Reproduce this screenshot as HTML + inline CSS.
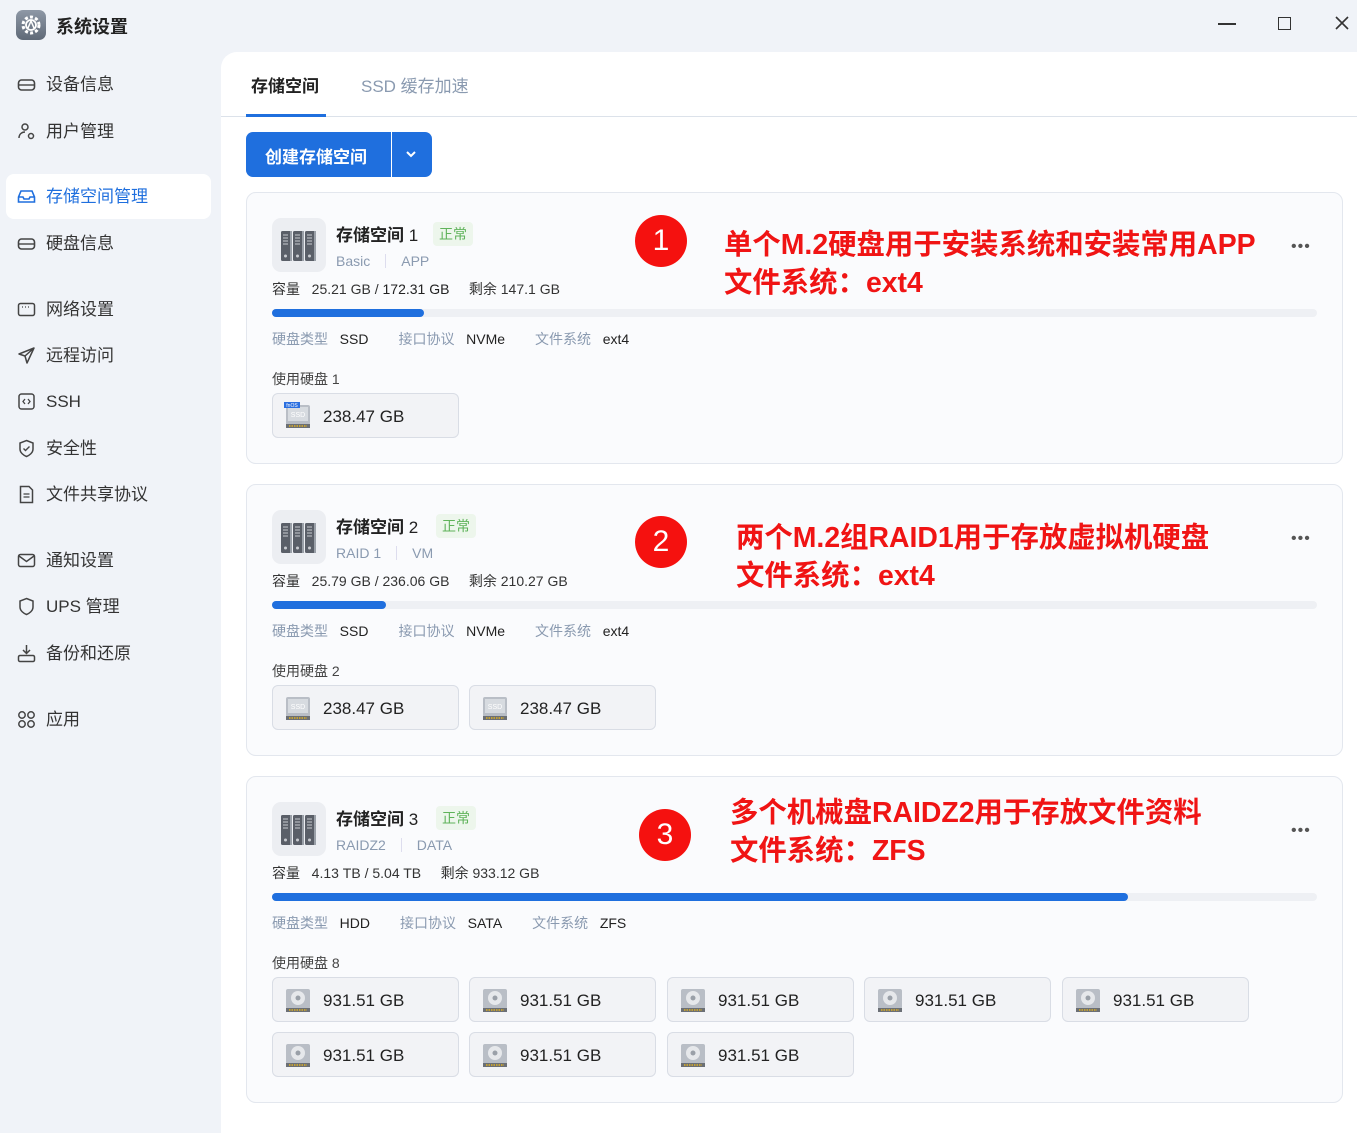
<!DOCTYPE html>
<html><head><meta charset="utf-8">
<style>
*{box-sizing:border-box;margin:0;padding:0}
body{width:1357px;height:1133px;overflow:hidden;background:#f0f3f8;font-family:"Liberation Sans","Noto Sans CJK SC",sans-serif;color:#222;position:relative}
.a{position:absolute;white-space:nowrap}
.nav{position:absolute;left:46px;font-size:17px;color:#333;line-height:20px;transform:translateY(2px)}
.ic{position:absolute;left:17px;width:19px;height:19px;transform:translateY(1px)}
.main{position:absolute;left:221px;top:52px;width:1136px;height:1081px;background:#fff;border-top-left-radius:16px}
.card{position:absolute;left:246px;width:1097px;background:#fafbfd;border:1px solid #e3e7ee;border-radius:10px}
.chip{position:absolute;width:187px;height:45px;background:#f2f3f6;border:1px solid #d9dde5;border-radius:6px}
.chip span{position:absolute;left:50px;top:13px;font-size:17px;color:#222}
.red{position:absolute;color:#f01414;font-weight:bold;font-size:28.4px;line-height:38px;white-space:nowrap;transform:translateY(2px)}
.circ{position:absolute;width:52px;height:52px;border-radius:50%;background:#f5110f;color:#fff;font-size:30px;text-align:center;line-height:52px}
.lbl{color:#8a9ab0}
</style></head><body>
<div class="a" style="left:16px;top:10px;width:30px;height:30px;border-radius:7px;background:linear-gradient(#8e98a6,#5f6977)">
<svg width="30" height="30" viewBox="0 0 30 30"><circle cx="15" cy="15" r="8" fill="none" stroke="#fff" stroke-width="3" stroke-dasharray="3 2.2"/><circle cx="15" cy="15" r="5" fill="none" stroke="#fff" stroke-width="1.8"/><path d="M12 18 L15 11 L18 18" stroke="#fff" stroke-width="1.5" fill="none"/></svg></div>
<div class="a" style="left:56px;top:13px;font-size:18px;font-weight:bold;color:#222">系统设置</div>
<div class="a" style="left:1218px;top:23px;width:18px;height:2px;background:#333"></div>
<div class="a" style="left:1278px;top:17px;width:13px;height:13px;border:1.6px solid #333"></div>
<svg class="a" style="left:1335px;top:16px" width="14" height="14"><path d="M1 1L13 13M13 1L1 13" stroke="#333" stroke-width="1.6"/></svg>

<div class="a" style="left:6px;top:174px;width:205px;height:45px;background:#fff;border-radius:8px"></div>
<svg class="ic" style="top:74px" viewBox="0 0 19 19"><rect x="1.5" y="5" width="16" height="10" rx="3" fill="none" stroke="#444" stroke-width="1.6"/><path d="M1.5 10H17.5" stroke="#444" stroke-width="1.4"/></svg>
<div class="nav" style="top:73px">设备信息</div>
<svg class="ic" style="top:121px" viewBox="0 0 19 19"><circle cx="8" cy="5" r="3" fill="none" stroke="#444" stroke-width="1.5"/><path d="M2 16c0-4 3-6 6-6" fill="none" stroke="#444" stroke-width="1.5"/><circle cx="14" cy="14" r="2.5" fill="none" stroke="#444" stroke-width="1.5"/></svg>
<div class="nav" style="top:120px">用户管理</div>
<svg class="ic" style="top:186px" viewBox="0 0 19 19"><path d="M1.5 10L4 4H15L17.5 10V15H1.5Z M1.5 10H6L7 12H12L13 10H17.5" fill="none" stroke="#1f6fde" stroke-width="1.6"/></svg>
<div class="nav" style="top:185px;color:#1f6fde">存储空间管理</div>
<svg class="ic" style="top:233px" viewBox="0 0 19 19"><rect x="1.5" y="5" width="16" height="10" rx="3" fill="none" stroke="#444" stroke-width="1.6"/><path d="M1.5 10H17.5" stroke="#444" stroke-width="1.4"/></svg>
<div class="nav" style="top:232px">硬盘信息</div>
<svg class="ic" style="top:299px" viewBox="0 0 19 19"><rect x="1.5" y="3.5" width="16" height="12" rx="2" fill="none" stroke="#444" stroke-width="1.5"/><path d="M5 7h1M8 7h1M11 7h1" stroke="#444" stroke-width="1.2"/></svg>
<div class="nav" style="top:298px">网络设置</div>
<svg class="ic" style="top:345px" viewBox="0 0 19 19"><path d="M17 2L2 8L8 10L10 17Z M8 10L17 2" fill="none" stroke="#444" stroke-width="1.5" stroke-linejoin="round"/></svg>
<div class="nav" style="top:344px">远程访问</div>
<svg class="ic" style="top:391px" viewBox="0 0 19 19"><rect x="2" y="2" width="15" height="15" rx="2.5" fill="none" stroke="#444" stroke-width="1.5"/><path d="M8 7L6 9.5L8 12M11 7L13 9.5L11 12" fill="none" stroke="#444" stroke-width="1.3"/></svg>
<div class="nav" style="top:390px">SSH</div>
<svg class="ic" style="top:438px" viewBox="0 0 19 19"><path d="M9.5 1.5L16 4V10C16 14 12 16.5 9.5 17.5C7 16.5 3 14 3 10V4Z" fill="none" stroke="#444" stroke-width="1.5"/><path d="M6.5 9.5L8.5 11.5L12.5 7.5" fill="none" stroke="#444" stroke-width="1.4"/></svg>
<div class="nav" style="top:437px">安全性</div>
<svg class="ic" style="top:484px" viewBox="0 0 19 19"><path d="M3.5 1.5H12L15.5 5V17.5H3.5Z" fill="none" stroke="#444" stroke-width="1.5"/><path d="M6.5 9H12.5M6.5 12H12.5" stroke="#444" stroke-width="1.3"/></svg>
<div class="nav" style="top:483px">文件共享协议</div>
<svg class="ic" style="top:550px" viewBox="0 0 19 19"><rect x="1.5" y="3.5" width="16" height="12" rx="2" fill="none" stroke="#444" stroke-width="1.5"/><path d="M2 5L9.5 10.5L17 5" fill="none" stroke="#444" stroke-width="1.5"/></svg>
<div class="nav" style="top:549px">通知设置</div>
<svg class="ic" style="top:596px" viewBox="0 0 19 19"><path d="M9.5 1.5L16 4V10C16 14 12 16.5 9.5 17.5C7 16.5 3 14 3 10V4Z" fill="none" stroke="#444" stroke-width="1.5"/></svg>
<div class="nav" style="top:595px">UPS 管理</div>
<svg class="ic" style="top:643px" viewBox="0 0 19 19"><path d="M9.5 1V9M6 6L9.5 9.5L13 6" fill="none" stroke="#444" stroke-width="1.5"/><rect x="1.5" y="11.5" width="16" height="6" rx="1.5" fill="none" stroke="#444" stroke-width="1.5"/></svg>
<div class="nav" style="top:642px">备份和还原</div>
<svg class="ic" style="top:709px" viewBox="0 0 19 19"><g fill="none" stroke="#444" stroke-width="1.5"><circle cx="5" cy="5" r="3.2"/><circle cx="14" cy="5" r="3.2"/><circle cx="5" cy="14" r="3.2"/><circle cx="14" cy="14" r="3.2"/></g></svg>
<div class="nav" style="top:708px">应用</div>

<div class="main"></div>
<div class="a" style="left:251px;top:72px;font-size:17px;font-weight:bold;color:#222">存储空间</div>
<div class="a" style="left:361px;top:72px;font-size:17px;color:#8a9ab0">SSD 缓存加速</div>
<div class="a" style="left:221px;top:116px;width:1136px;height:1px;background:#dce2ea"></div>
<div class="a" style="left:246px;top:114px;width:80px;height:3px;background:#1f6fde"></div>
<div class="a" style="left:246px;top:132px;width:186px;height:45px;background:#1f6fde;border-radius:7px"></div>
<div class="a" style="left:391px;top:132px;width:1px;height:45px;background:#fff"></div>
<div class="a" style="left:265px;top:143px;font-size:17px;font-weight:bold;color:#fff">创建存储空间</div>
<svg class="a" style="left:405px;top:150px" width="12" height="8"><path d="M2 2L6 6L10 2" stroke="#fff" stroke-width="2" fill="none"/></svg>

<div class="card" style="top:192px;height:272px"></div>
<div class="card" style="top:484px;height:272px"></div>
<div class="card" style="top:776px;height:327px"></div>

<!-- CARD 1 -->
<div class="a" style="left:272px;top:218px;width:54px;height:54px;background:#eceef2;border-radius:9px"><svg width="54" height="54" viewBox="0 0 54 54"><g fill="#5a5f68"><rect x="9" y="13" width="11" height="30" rx="1.5"/><rect x="21" y="13" width="11" height="30" rx="1.5"/><rect x="33" y="13" width="11" height="30" rx="1.5"/></g><g fill="#9aa0a8"><rect x="18" y="13" width="2" height="30"/><rect x="30" y="13" width="2" height="30"/><rect x="42" y="13" width="2" height="30"/></g><g stroke="#c8cbd0" stroke-width="1"><path d="M11 17h5M11 20h5M11 23h5M11 26h5M23 17h5M23 20h5M23 23h5M23 26h5M35 17h5M35 20h5M35 23h5M35 26h5"/></g><g fill="#c8cbd0"><circle cx="13.5" cy="38" r="1.5"/><circle cx="25.5" cy="38" r="1.5"/><circle cx="37.5" cy="38" r="1.5"/></g></svg></div>
<div class="a" style="left:336px;top:221px;font-size:17px;font-weight:bold">存储空间 <span style="font-weight:normal">1</span></div>
<div class="a" style="left:433px;top:222px;width:40px;height:24px;background:#edf6ec;border-radius:4px;color:#5fb35a;font-size:14px;text-align:center;line-height:24px">正常</div>
<div class="a" style="left:336px;top:253px;font-size:14px;color:#8a9ab0">Basic<span style="display:inline-block;width:1px;height:14px;background:#dde;margin:0 15px;vertical-align:-2px"></span>APP</div>
<div class="a" style="left:272px;top:279px;font-size:14px;color:#333">容量&nbsp;&nbsp; 25.21 GB / <span style="color:#222">172.31 GB</span>&nbsp;&nbsp;&nbsp;&nbsp; 剩余 147.1 GB</div>
<div class="a" style="left:272px;top:309px;width:1045px;height:8px;background:#eef0f4;border-radius:4px"><div style="width:152px;height:8px;background:#1f6fde;border-radius:4px"></div></div>
<div class="a" style="left:272px;top:329px;font-size:14px;color:#222"><span class="lbl">硬盘类型</span>&nbsp;&nbsp; SSD<span style="margin-left:30px" class="lbl">接口协议</span>&nbsp;&nbsp; NVMe<span style="margin-left:30px" class="lbl">文件系统</span>&nbsp;&nbsp; ext4</div>
<div class="a" style="left:272px;top:369px;font-size:14px;color:#444">使用硬盘 1</div>

<!-- CARD 2 -->
<div class="a" style="left:272px;top:510px;width:54px;height:54px;background:#eceef2;border-radius:9px"><svg width="54" height="54" viewBox="0 0 54 54"><g fill="#5a5f68"><rect x="9" y="13" width="11" height="30" rx="1.5"/><rect x="21" y="13" width="11" height="30" rx="1.5"/><rect x="33" y="13" width="11" height="30" rx="1.5"/></g><g fill="#9aa0a8"><rect x="18" y="13" width="2" height="30"/><rect x="30" y="13" width="2" height="30"/><rect x="42" y="13" width="2" height="30"/></g><g stroke="#c8cbd0"><path d="M11 17h5M11 20h5M11 23h5M11 26h5M23 17h5M23 20h5M23 23h5M23 26h5M35 17h5M35 20h5M35 23h5M35 26h5"/></g><g fill="#c8cbd0"><circle cx="13.5" cy="38" r="1.5"/><circle cx="25.5" cy="38" r="1.5"/><circle cx="37.5" cy="38" r="1.5"/></g></svg></div>
<div class="a" style="left:336px;top:513px;font-size:17px;font-weight:bold">存储空间 <span style="font-weight:normal">2</span></div>
<div class="a" style="left:436px;top:514px;width:40px;height:24px;background:#edf6ec;border-radius:4px;color:#5fb35a;font-size:14px;text-align:center;line-height:24px">正常</div>
<div class="a" style="left:336px;top:545px;font-size:14px;color:#8a9ab0">RAID 1<span style="display:inline-block;width:1px;height:14px;background:#dde;margin:0 15px;vertical-align:-2px"></span>VM</div>
<div class="a" style="left:272px;top:571px;font-size:14px;color:#333">容量&nbsp;&nbsp; 25.79 GB / 236.06 GB&nbsp;&nbsp;&nbsp;&nbsp; 剩余 210.27 GB</div>
<div class="a" style="left:272px;top:601px;width:1045px;height:8px;background:#eef0f4;border-radius:4px"><div style="width:114px;height:8px;background:#1f6fde;border-radius:4px"></div></div>
<div class="a" style="left:272px;top:621px;font-size:14px;color:#222"><span class="lbl">硬盘类型</span>&nbsp;&nbsp; SSD<span style="margin-left:30px" class="lbl">接口协议</span>&nbsp;&nbsp; NVMe<span style="margin-left:30px" class="lbl">文件系统</span>&nbsp;&nbsp; ext4</div>
<div class="a" style="left:272px;top:661px;font-size:14px;color:#444">使用硬盘 2</div>

<!-- CARD 3 -->
<div class="a" style="left:272px;top:802px;width:54px;height:54px;background:#eceef2;border-radius:9px"><svg width="54" height="54" viewBox="0 0 54 54"><g fill="#5a5f68"><rect x="9" y="13" width="11" height="30" rx="1.5"/><rect x="21" y="13" width="11" height="30" rx="1.5"/><rect x="33" y="13" width="11" height="30" rx="1.5"/></g><g fill="#9aa0a8"><rect x="18" y="13" width="2" height="30"/><rect x="30" y="13" width="2" height="30"/><rect x="42" y="13" width="2" height="30"/></g><g stroke="#c8cbd0"><path d="M11 17h5M11 20h5M11 23h5M11 26h5M23 17h5M23 20h5M23 23h5M23 26h5M35 17h5M35 20h5M35 23h5M35 26h5"/></g><g fill="#c8cbd0"><circle cx="13.5" cy="38" r="1.5"/><circle cx="25.5" cy="38" r="1.5"/><circle cx="37.5" cy="38" r="1.5"/></g></svg></div>
<div class="a" style="left:336px;top:805px;font-size:17px;font-weight:bold">存储空间 <span style="font-weight:normal">3</span></div>
<div class="a" style="left:436px;top:806px;width:40px;height:24px;background:#edf6ec;border-radius:4px;color:#5fb35a;font-size:14px;text-align:center;line-height:24px">正常</div>
<div class="a" style="left:336px;top:837px;font-size:14px;color:#8a9ab0">RAIDZ2<span style="display:inline-block;width:1px;height:14px;background:#dde;margin:0 15px;vertical-align:-2px"></span>DATA</div>
<div class="a" style="left:272px;top:863px;font-size:14px;color:#333">容量&nbsp;&nbsp; 4.13 TB / 5.04 TB&nbsp;&nbsp;&nbsp;&nbsp; 剩余 933.12 GB</div>
<div class="a" style="left:272px;top:893px;width:1045px;height:8px;background:#eef0f4;border-radius:4px"><div style="width:856px;height:8px;background:#1f6fde;border-radius:4px"></div></div>
<div class="a" style="left:272px;top:913px;font-size:14px;color:#222"><span class="lbl">硬盘类型</span>&nbsp;&nbsp; HDD<span style="margin-left:30px" class="lbl">接口协议</span>&nbsp;&nbsp; SATA<span style="margin-left:30px" class="lbl">文件系统</span>&nbsp;&nbsp; ZFS</div>
<div class="a" style="left:272px;top:953px;font-size:14px;color:#444">使用硬盘 8</div>

<div class="a" style="left:1291px;top:238px;font-size:16px;color:#555;letter-spacing:1px">•••</div>
<div class="a" style="left:1291px;top:530px;font-size:16px;color:#555;letter-spacing:1px">•••</div>
<div class="a" style="left:1291px;top:822px;font-size:16px;color:#555;letter-spacing:1px">•••</div>

<div class="chip" style="left:272px;top:393px"><svg class="a" style="left:11px;top:8px" width="28" height="28" viewBox="0 0 28 28"><rect x="2" y="3" width="24" height="20" rx="2" fill="#b9bec6"/><rect x="4" y="5" width="20" height="14" fill="#d7dbe0"/><text x="14" y="15" font-size="7" fill="#fff" text-anchor="middle" font-family="Liberation Sans">SSD</text><rect x="2" y="22" width="24" height="4" fill="#6b6f75"/><path d="M5 24h18" stroke="#e0b020" stroke-width="1.5" stroke-dasharray="1.5 1"/><rect x="0" y="0" width="16" height="6" fill="#2a6fe0"/><text x="8" y="5" font-size="5" fill="#fff" text-anchor="middle" font-family="Liberation Sans">fnOS</text></svg><span>238.47 GB</span></div>
<div class="chip" style="left:272px;top:685px"><svg class="a" style="left:11px;top:8px" width="28" height="28" viewBox="0 0 28 28"><rect x="2" y="3" width="24" height="20" rx="2" fill="#b9bec6"/><rect x="4" y="5" width="20" height="14" fill="#d7dbe0"/><text x="14" y="15" font-size="7" fill="#fff" text-anchor="middle" font-family="Liberation Sans">SSD</text><rect x="2" y="22" width="24" height="4" fill="#6b6f75"/><path d="M5 24h18" stroke="#e0b020" stroke-width="1.5" stroke-dasharray="1.5 1"/></svg><span>238.47 GB</span></div>
<div class="chip" style="left:469px;top:685px"><svg class="a" style="left:11px;top:8px" width="28" height="28" viewBox="0 0 28 28"><rect x="2" y="3" width="24" height="20" rx="2" fill="#b9bec6"/><rect x="4" y="5" width="20" height="14" fill="#d7dbe0"/><text x="14" y="15" font-size="7" fill="#fff" text-anchor="middle" font-family="Liberation Sans">SSD</text><rect x="2" y="22" width="24" height="4" fill="#6b6f75"/><path d="M5 24h18" stroke="#e0b020" stroke-width="1.5" stroke-dasharray="1.5 1"/></svg><span>238.47 GB</span></div>

<div class="chip" style="left:272px;top:977px"><svg class="a" style="left:11px;top:8px" width="28" height="28" viewBox="0 0 28 28"><rect x="2" y="3" width="24" height="20" rx="2" fill="#b9bec6"/><circle cx="14" cy="12" r="7" fill="#e6e8eb"/><circle cx="14" cy="12" r="2.5" fill="#9aa0a8"/><rect x="2" y="22" width="24" height="4" fill="#6b6f75"/><path d="M5 24h18" stroke="#e0b020" stroke-width="1.5" stroke-dasharray="1.5 1"/></svg><span>931.51 GB</span></div>
<div class="chip" style="left:469px;top:977px"><svg class="a" style="left:11px;top:8px" width="28" height="28" viewBox="0 0 28 28"><rect x="2" y="3" width="24" height="20" rx="2" fill="#b9bec6"/><circle cx="14" cy="12" r="7" fill="#e6e8eb"/><circle cx="14" cy="12" r="2.5" fill="#9aa0a8"/><rect x="2" y="22" width="24" height="4" fill="#6b6f75"/><path d="M5 24h18" stroke="#e0b020" stroke-width="1.5" stroke-dasharray="1.5 1"/></svg><span>931.51 GB</span></div>
<div class="chip" style="left:667px;top:977px"><svg class="a" style="left:11px;top:8px" width="28" height="28" viewBox="0 0 28 28"><rect x="2" y="3" width="24" height="20" rx="2" fill="#b9bec6"/><circle cx="14" cy="12" r="7" fill="#e6e8eb"/><circle cx="14" cy="12" r="2.5" fill="#9aa0a8"/><rect x="2" y="22" width="24" height="4" fill="#6b6f75"/><path d="M5 24h18" stroke="#e0b020" stroke-width="1.5" stroke-dasharray="1.5 1"/></svg><span>931.51 GB</span></div>
<div class="chip" style="left:864px;top:977px"><svg class="a" style="left:11px;top:8px" width="28" height="28" viewBox="0 0 28 28"><rect x="2" y="3" width="24" height="20" rx="2" fill="#b9bec6"/><circle cx="14" cy="12" r="7" fill="#e6e8eb"/><circle cx="14" cy="12" r="2.5" fill="#9aa0a8"/><rect x="2" y="22" width="24" height="4" fill="#6b6f75"/><path d="M5 24h18" stroke="#e0b020" stroke-width="1.5" stroke-dasharray="1.5 1"/></svg><span>931.51 GB</span></div>
<div class="chip" style="left:1062px;top:977px"><svg class="a" style="left:11px;top:8px" width="28" height="28" viewBox="0 0 28 28"><rect x="2" y="3" width="24" height="20" rx="2" fill="#b9bec6"/><circle cx="14" cy="12" r="7" fill="#e6e8eb"/><circle cx="14" cy="12" r="2.5" fill="#9aa0a8"/><rect x="2" y="22" width="24" height="4" fill="#6b6f75"/><path d="M5 24h18" stroke="#e0b020" stroke-width="1.5" stroke-dasharray="1.5 1"/></svg><span>931.51 GB</span></div>
<div class="chip" style="left:272px;top:1032px"><svg class="a" style="left:11px;top:8px" width="28" height="28" viewBox="0 0 28 28"><rect x="2" y="3" width="24" height="20" rx="2" fill="#b9bec6"/><circle cx="14" cy="12" r="7" fill="#e6e8eb"/><circle cx="14" cy="12" r="2.5" fill="#9aa0a8"/><rect x="2" y="22" width="24" height="4" fill="#6b6f75"/><path d="M5 24h18" stroke="#e0b020" stroke-width="1.5" stroke-dasharray="1.5 1"/></svg><span>931.51 GB</span></div>
<div class="chip" style="left:469px;top:1032px"><svg class="a" style="left:11px;top:8px" width="28" height="28" viewBox="0 0 28 28"><rect x="2" y="3" width="24" height="20" rx="2" fill="#b9bec6"/><circle cx="14" cy="12" r="7" fill="#e6e8eb"/><circle cx="14" cy="12" r="2.5" fill="#9aa0a8"/><rect x="2" y="22" width="24" height="4" fill="#6b6f75"/><path d="M5 24h18" stroke="#e0b020" stroke-width="1.5" stroke-dasharray="1.5 1"/></svg><span>931.51 GB</span></div>
<div class="chip" style="left:667px;top:1032px"><svg class="a" style="left:11px;top:8px" width="28" height="28" viewBox="0 0 28 28"><rect x="2" y="3" width="24" height="20" rx="2" fill="#b9bec6"/><circle cx="14" cy="12" r="7" fill="#e6e8eb"/><circle cx="14" cy="12" r="2.5" fill="#9aa0a8"/><rect x="2" y="22" width="24" height="4" fill="#6b6f75"/><path d="M5 24h18" stroke="#e0b020" stroke-width="1.5" stroke-dasharray="1.5 1"/></svg><span>931.51 GB</span></div>

<div class="circ" style="left:635px;top:215px">1</div>
<div class="red" style="left:724px;top:224px">单个M.2硬盘用于安装系统和安装常用APP<br>文件系统：ext4</div>
<div class="circ" style="left:635px;top:516px">2</div>
<div class="red" style="left:736px;top:517px">两个M.2组RAID1用于存放虚拟机硬盘<br>文件系统：ext4</div>
<div class="circ" style="left:639px;top:809px">3</div>
<div class="red" style="left:730px;top:792px">多个机械盘RAIDZ2用于存放文件资料<br>文件系统：ZFS</div>
</body></html>
